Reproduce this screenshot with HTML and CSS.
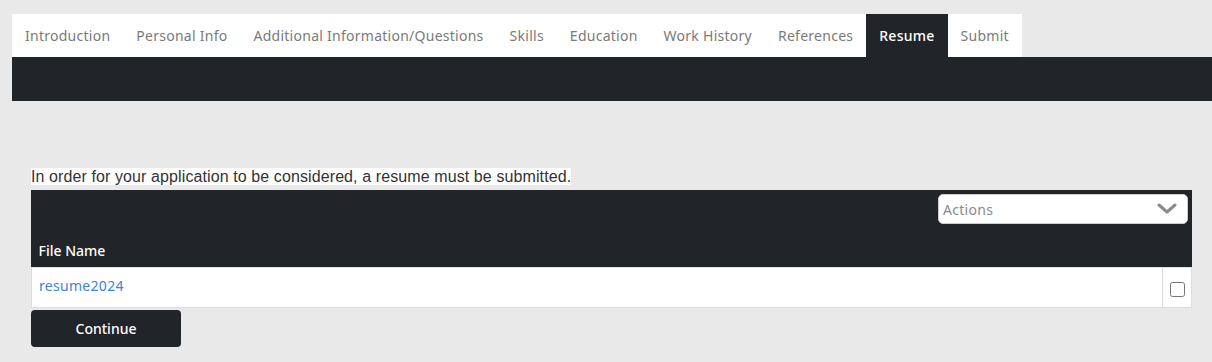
FILE: index.html
```html
<!DOCTYPE html>
<html lang="en">
<head>
    <meta charset="UTF-8">
    <title>Application - Resume</title>
    <link rel="stylesheet" href="styles.css">
</head>
<body>
    <!-- Step Tabs -->
    <div class="wizard">
        <ul class="steps">
            <li class="step">Introduction</li>
            <li class="step">Personal Info</li>
            <li class="step">Additional Information/Questions</li>
            <li class="step">Skills</li>
            <li class="step">Education</li>
            <li class="step">Work History</li>
            <li class="step">References</li>
            <li class="step active">Resume</li>
            <li class="step">Submit</li>
        </ul>
        <div class="step-band"></div>
    </div>

    <!-- Resume Section -->
    <div class="content">
        <p class="notice"><span>In order for your application to be considered, a resume must be submitted.</span></p>

        <div class="grid">
            <div class="grid-toolbar">
                <div class="actions">
                    <span>Actions</span>
                    <svg width="20" height="12" viewBox="0 0 20 12">
                        <path d="M2 2 L10 9 L18 2" fill="none" stroke="#8a8a8a" stroke-width="3" stroke-linecap="round" stroke-linejoin="round"/>
                    </svg>
                </div>
            </div>
            <table class="files">
                <thead>
                    <tr>
                        <th>File Name</th>
                        <th class="check-col"></th>
                    </tr>
                </thead>
                <tbody>
                    <tr>
                        <td><a href="#">resume2024</a></td>
                        <td class="check-col"><input type="checkbox"></td>
                    </tr>
                </tbody>
            </table>
        </div>

        <button class="continue-btn">Continue</button>
    </div>
</body>
</html>
```

FILE: styles.css
```css
body, html {
    margin: 0;
    padding: 0;
    background-color: #e9e9e9;
    font-family: 'Noto Sans', sans-serif;
}

.wizard {
    padding: 14px 0 0 12px;
}

.steps {
    display: inline-flex;
    list-style: none;
    margin: 0;
    padding: 0;
    background-color: #fff;
}

.step {
    padding: 0 13px;
    height: 43px;
    line-height: 43px;
    font-size: 14px;
    letter-spacing: 0.26px;
    color: #7a7a7a;
}

.step.active {
    background-color: #212428;
    color: #fff;
    font-weight: 500;
}

.step-band {
    height: 44px;
    background-color: #212428;
}

.content {
    padding: 66px 20px 0 31px;
}

.notice {
    margin: 0 0 4px;
    font-family: 'Liberation Sans', Arial, sans-serif;
    font-size: 16px;
    line-height: 19px;
    letter-spacing: 0.1px;
    color: #333;
}

.notice span {
    background-color: #fff;
}

.grid {
    background-color: #212428;
}

.grid-toolbar {
    display: flex;
    justify-content: flex-end;
    padding: 4px 4px 9px;
}

.actions {
    width: 250px;
    height: 30px;
    background-color: #fff;
    border: 1px solid #ccc;
    border-radius: 5px;
    display: flex;
    align-items: center;
    justify-content: space-between;
    padding: 0 10px 0 4px;
    box-sizing: border-box;
    font-size: 14px;
    letter-spacing: 0.3px;
    color: #8a8a8a;
}

.files {
    width: 100%;
    border-collapse: collapse;
}

.files th {
    text-align: left;
    color: #fff;
    font-size: 14px;
    font-weight: 500;
    height: 34px;
    padding: 0 7px;
}

.files td {
    background-color: #fff;
    border: 1px solid #ddd;
    height: 34px;
    padding: 0 7px 5px;
    font-size: 14px;
}

.files a {
    color: #3c7fe6;
    letter-spacing: 0.3px;
    text-decoration: none;
}

.check-col {
    width: 15px;
    text-align: center;
}

.files td.check-col {
    padding: 0 6px;
}

.check-col input {
    margin: 0;
    width: 15px;
    height: 15px;
    vertical-align: middle;
}

.continue-btn {
    margin-top: 2px;
    width: 150px;
    height: 37px;
    background-color: #212428;
    color: #fff;
    border: none;
    border-radius: 4px;
    font-family: 'Noto Sans', sans-serif;
    font-size: 14px;
    font-weight: 500;
    cursor: pointer;
}
```
